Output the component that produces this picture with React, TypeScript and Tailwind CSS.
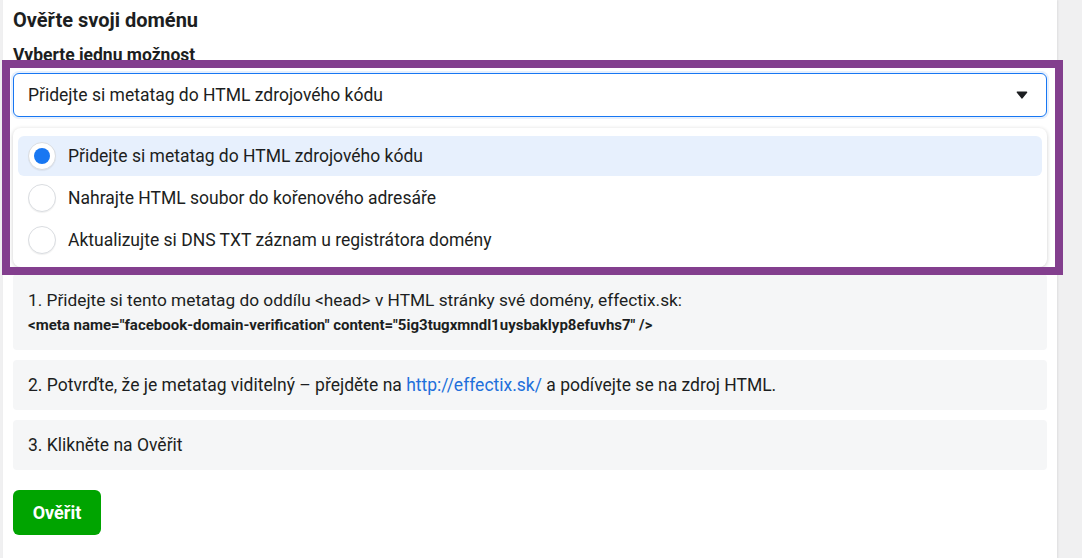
import React, { useState } from "react";

const options = [
  "Přidejte si metatag do HTML zdrojového kódu",
  "Nahrajte HTML soubor do kořenového adresáře",
  "Aktualizujte si DNS TXT záznam u registrátora domény",
];

const Radio: React.FC<{ checked: boolean }> = ({ checked }) => (
  <span className="flex h-7 w-7 shrink-0 items-center justify-center rounded-full border border-[#dadde1] bg-white shadow-[0_1px_1px_rgba(0,0,0,0.06)]">
    {checked && <span className="h-4 w-4 rounded-full bg-[#1877f2]" />}
  </span>
);

const App: React.FC = () => {
  const [selected, setSelected] = useState(0);

  return (
    <div
      className="relative flex min-h-screen bg-[#f0f0f1] pl-[3px] text-[#1c1e21]"
      style={{ fontFamily: "Roboto, 'Liberation Sans', sans-serif" }}
    >
      <div className="w-[1054px] bg-white px-[10px] pt-2 pb-6 shadow-[1px_0_2px_rgba(0,0,0,0.08)]">
        <h2 className="text-[20px] font-bold leading-6">Ověřte svoji doménu</h2>
        <p className="mt-[13px] text-[17.5px] font-bold leading-5">
          Vyberte jednu možnost
        </p>

        {/* select */}
        <div className="mt-2 flex h-[44px] items-center justify-between rounded-md border border-[#1877f2] bg-white pl-[14px] pr-[18px] shadow-[0_0_0_2px_#e7f0fd]">
          <span className="text-[17.5px] leading-5">{options[selected]}</span>
          <svg width="12" height="8" viewBox="0 0 12 8">
            <path
              d="M1.5 1.2h9L6 6.8z"
              fill="#1c1e21"
              stroke="#1c1e21"
              strokeWidth="1.6"
              strokeLinejoin="round"
            />
          </svg>
        </div>

        {/* dropdown list */}
        <div className="mt-[11px] rounded-lg bg-white pt-2 pb-[7px] shadow-[0_1px_4px_rgba(0,0,0,0.2)]">
          {options.map((opt, i) => (
            <button
              key={opt}
              onClick={() => setSelected(i)}
              className={`mx-[5px] flex h-10 w-[1024px] items-center gap-3 rounded-md px-[10px] text-left text-[17.5px] leading-5 ${
                i > 0 ? "mt-[2px]" : ""
              } ${i === selected ? "bg-[#e7f0fd]" : ""}`}
            >
              <Radio checked={i === selected} />
              <span>{opt}</span>
            </button>
          ))}
        </div>

        {/* steps */}
        <div className="mt-[7px] rounded-[4px] bg-[#f5f6f7] px-[15px] pt-4 pb-4">
          <p className="text-[17.3px] leading-5">
            1. Přidejte si tento metatag do oddílu &lt;head&gt; v HTML stránky své
            domény, effectix.sk:
          </p>
          <p className="mt-[6px] text-[15px] font-bold leading-[18px]">
            &lt;meta name="facebook-domain-verification"
            content="5ig3tugxmndl1uysbaklyp8efuvhs7" /&gt;
          </p>
        </div>

        <div className="mt-[10px] rounded-[4px] bg-[#f5f6f7] px-[15px] py-[15px]">
          <p className="text-[17.5px] leading-5">
            2. Potvrďte, že je metatag viditelný – přejděte na{" "}
            <a href="#" className="text-[#216fdb]">
              http://effectix.sk/
            </a>{" "}
            a podívejte se na zdroj HTML.
          </p>
        </div>

        <div className="mt-[10px] rounded-[4px] bg-[#f5f6f7] px-[15px] py-[15px]">
          <p className="text-[17.5px] leading-5">3. Klikněte na Ověřit</p>
        </div>

        <button className="mt-5 h-[45px] w-[88px] rounded-md bg-[#00a400] text-[18px] font-bold text-white">
          Ověřit
        </button>
      </div>

      {/* highlight annotation */}
      <div className="pointer-events-none absolute left-[2px] top-[60px] h-[215px] w-[1061px] border-8 border-[#833f8e]" />
    </div>
  );
};

export default App;
